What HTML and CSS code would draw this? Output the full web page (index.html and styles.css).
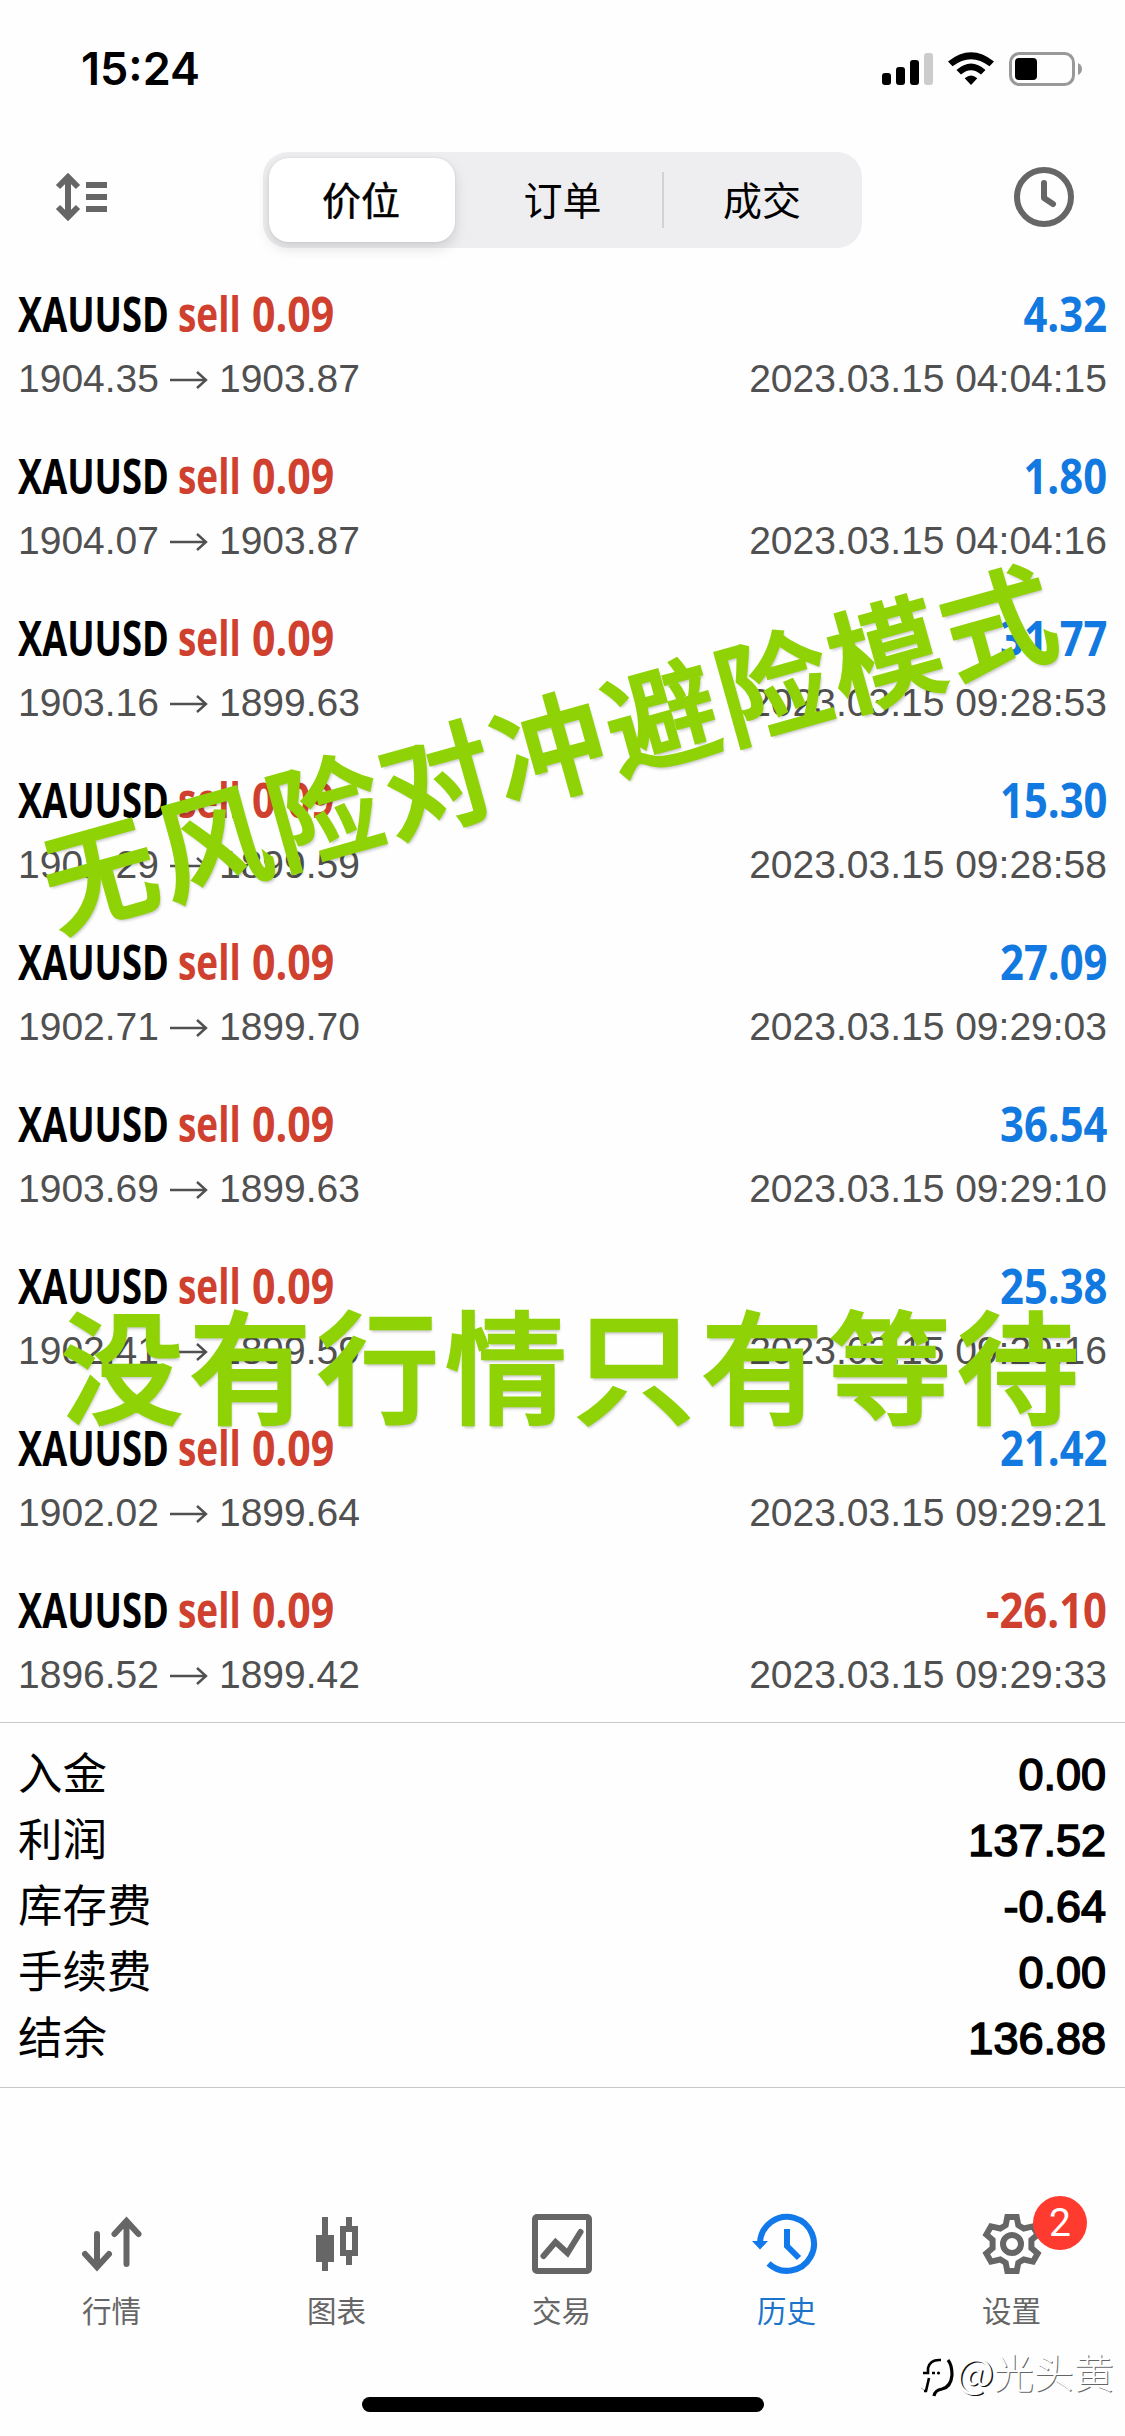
FILE: index.html
```html
<!DOCTYPE html>
<html lang="zh-CN">
<head>
<meta charset="utf-8">
<title>历史</title>
<link rel="stylesheet" href="styles.css">
</head>
<body>
<div class="screen">
  <header class="status">
    <span class="time">15:24</span>
    <svg class="status-icons" width="204" height="40" viewBox="0 0 204 40">
      <rect x="2" y="23" width="9" height="12" rx="3"/>
      <rect x="16" y="17" width="9" height="18" rx="3"/>
      <rect x="30" y="10" width="9" height="25" rx="3"/>
      <rect x="44" y="3" width="9" height="32" rx="3" fill="#ccc"/>
      <path d="M68 11.5Q91 -7 114 11.5L109.500 16.300Q91 2 72.500 16.300Z"/>
      <path d="M76.500 20Q91 7 105.500 20L101 24.500Q91 16 81 24.500Z"/>
      <path d="M84.700 28.300Q91 22.700 97.300 28.300L91 35Z"/>
      <rect x="130.500" y="3.500" width="63" height="31" rx="9" fill="none" stroke="#999" stroke-width="3"/>
      <rect x="135" y="8" width="22" height="22" rx="4"/>
      <path d="M198 13Q202 15 202 19T198 25Z" fill="#999"/>
    </svg>
  </header>

  <nav class="topbar">
    <svg class="sort" width="54" height="50" viewBox="0 0 54 50">
      <path d="M14 6V44M4 15L14 5L24 15M4 35L14 45L24 35" fill="none" stroke="#666" stroke-width="6"/>
      <path d="M32 10h21v6h-21zM32 22h21v6h-21zM32 34h21v6h-21z" fill="#666"/>
    </svg>
    <div class="segments">
      <span class="segment active">价位</span>
      <span class="segment divided">订单</span>
      <span class="segment">成交</span>
    </div>
    <svg class="clock" width="60" height="60" viewBox="0 0 60 60" fill="none" stroke="#666" stroke-width="6">
      <circle cx="30" cy="30" r="27"/>
      <path d="M30 16V31L39 37" stroke-linecap="round" stroke-linejoin="round"/>
    </svg>
  </nav>

  <svg class="defs" width="0" height="0"><symbol id="arrow" viewBox="0 0 38 20"><path d="M0 10H36M27 2L36 10L27 18" fill="none" stroke="#505050" stroke-width="2.400"/></symbol></svg>

  <main class="deals">
    <article class="deal"><div class="line"><span class="name"><b class="symbol">XAUUSD</b><b class="side">sell</b><b class="volume">0.09</b></span><b class="profit">4.32</b></div><div class="line detail"><span class="prices"><span>1904.35</span><svg><use href="#arrow"/></svg><span>1903.87</span></span><time>2023.03.15 04:04:15</time></div></article>
    <article class="deal"><div class="line"><span class="name"><b class="symbol">XAUUSD</b><b class="side">sell</b><b class="volume">0.09</b></span><b class="profit">1.80</b></div><div class="line detail"><span class="prices"><span>1904.07</span><svg><use href="#arrow"/></svg><span>1903.87</span></span><time>2023.03.15 04:04:16</time></div></article>
    <article class="deal"><div class="line"><span class="name"><b class="symbol">XAUUSD</b><b class="side">sell</b><b class="volume">0.09</b></span><b class="profit">31.77</b></div><div class="line detail"><span class="prices"><span>1903.16</span><svg><use href="#arrow"/></svg><span>1899.63</span></span><time>2023.03.15 09:28:53</time></div></article>
    <article class="deal"><div class="line"><span class="name"><b class="symbol">XAUUSD</b><b class="side">sell</b><b class="volume">0.09</b></span><b class="profit">15.30</b></div><div class="line detail"><span class="prices"><span>1901.29</span><svg><use href="#arrow"/></svg><span>1899.59</span></span><time>2023.03.15 09:28:58</time></div></article>
    <article class="deal"><div class="line"><span class="name"><b class="symbol">XAUUSD</b><b class="side">sell</b><b class="volume">0.09</b></span><b class="profit">27.09</b></div><div class="line detail"><span class="prices"><span>1902.71</span><svg><use href="#arrow"/></svg><span>1899.70</span></span><time>2023.03.15 09:29:03</time></div></article>
    <article class="deal"><div class="line"><span class="name"><b class="symbol">XAUUSD</b><b class="side">sell</b><b class="volume">0.09</b></span><b class="profit">36.54</b></div><div class="line detail"><span class="prices"><span>1903.69</span><svg><use href="#arrow"/></svg><span>1899.63</span></span><time>2023.03.15 09:29:10</time></div></article>
    <article class="deal"><div class="line"><span class="name"><b class="symbol">XAUUSD</b><b class="side">sell</b><b class="volume">0.09</b></span><b class="profit">25.38</b></div><div class="line detail"><span class="prices"><span>1902.41</span><svg><use href="#arrow"/></svg><span>1899.59</span></span><time>2023.03.15 09:29:16</time></div></article>
    <article class="deal"><div class="line"><span class="name"><b class="symbol">XAUUSD</b><b class="side">sell</b><b class="volume">0.09</b></span><b class="profit">21.42</b></div><div class="line detail"><span class="prices"><span>1902.02</span><svg><use href="#arrow"/></svg><span>1899.64</span></span><time>2023.03.15 09:29:21</time></div></article>
    <article class="deal"><div class="line"><span class="name"><b class="symbol">XAUUSD</b><b class="side">sell</b><b class="volume">0.09</b></span><b class="profit loss">-26.10</b></div><div class="line detail"><span class="prices"><span>1896.52</span><svg><use href="#arrow"/></svg><span>1899.42</span></span><time>2023.03.15 09:29:33</time></div></article>
  </main>

  <section class="totals">
    <div class="total"><span>入金</span><b>0.00</b></div>
    <div class="total"><span>利润</span><b>137.52</b></div>
    <div class="total"><span>库存费</span><b>-0.64</b></div>
    <div class="total"><span>手续费</span><b>0.00</b></div>
    <div class="total"><span>结余</span><b>136.88</b></div>
  </section>

  <footer class="tabs">
    <div class="tab">
      <svg viewBox="0 0 72 64" fill="none" stroke="#666" stroke-width="6" stroke-linecap="round"><path d="M21 22V54M9 42L21 55L33 42M50.500 52V10M38.500 22L50.500 9L62.500 22"/></svg>
      <span>行情</span>
    </div>
    <div class="tab">
      <svg viewBox="0 0 72 64" fill="#666"><path d="M21 5h6v18h6v27h-6v9h-6v-9h-6v-27h6z"/><path fill-rule="evenodd" d="M45 5h6v9h6v30h-6v9h-6v-9h-6v-30h6zM45 20v18h6v-18z"/></svg>
      <span>图表</span>
    </div>
    <div class="tab">
      <svg viewBox="0 0 72 64" fill="none" stroke="#666" stroke-width="6"><rect x="9" y="5" width="54" height="54" rx="2"/><path d="M17.500 44L29.500 30L41.500 41L54.500 20" stroke-linecap="round"/></svg>
      <span>交易</span>
    </div>
    <div class="tab current">
      <svg viewBox="0 0 72 64" fill="none" stroke="#1279ea" stroke-width="6"><path d="M9 31A27 27 0 1 1 17.500 51.500"/><path d="M36 17V34L48 46"/><path d="M1 29h16l-8 8.500z" fill="#1279ea" stroke="none"/></svg>
      <span>历史</span>
    </div>
    <div class="tab">
      <svg viewBox="0 0 72 64"><g fill="none" stroke="#666" stroke-width="6" transform="translate(36 32)"><circle r="9"/><path d="M-4.700 -27L4.700 -27L6.300 -18.800L11.800 -15.500L21 -17.600L25.700 -9.400L19.400 -4L19.400 4L25.700 9.400L21 17.600L11.800 15.500L6.300 18.800L4.700 27L-4.700 27L-6.300 18.800L-11.800 15.500L-21 17.600L-25.700 9.400L-19.400 4L-19.400 -4L-25.700 -9.400L-21 -17.600L-11.800 -15.500L-6.300 -18.800Z"/></g></svg>
      <span>设置</span>
      <i class="badge">2</i>
    </div>
  </footer>
  <div class="home"></div>

  <div class="caption tilted">无风险对冲避险模式</div>
  <div class="caption level">没有行情只有等待</div>
  <div class="watermark">
    <svg width="36" height="42" viewBox="0 0 36 42" fill="none" stroke="#000"><path d="M1 32L4 34" stroke="#aaa" stroke-width="1"/><path d="M3 17H8V12Q10 4 19 4H21M12 17H15M9 22L6 35H4" stroke-width="2.600"/><path d="M28 4Q32 9 32 19Q31 31 22 33Q15 34 14 40" stroke-width="3.200"/><circle cx="18.500" cy="17" r="1.600" fill="#000" stroke="none"/></svg><span class="at">@</span><span class="author">光头黄</span>
  </div>
</div>
</body>
</html>
```
FILE: styles.css
```css
* { box-sizing: border-box; }

body {
  margin: 0;
  background: #fefefe;
  font-family: "Liberation Sans", "Noto Sans CJK SC", sans-serif;
  color: #000;
}

svg { display: block; flex: none; }
.defs { position: absolute; }

.screen {
  position: relative;
  width: 1125px;
  height: 2436px;
  overflow: hidden;
  display: flex;
  flex-direction: column;
}

.status {
  height: 132px;
  padding: 40px 41px 0 81px;
  display: flex;
  justify-content: space-between;
}
.time { font: 600 45px/58px Inter, sans-serif; }
.status-icons { margin-top: 10px; }

.topbar {
  height: 132px;
  padding: 20px 51px 0 54px;
  display: flex;
  align-items: flex-start;
}
.sort { margin-top: 20px; }
.clock { margin: 15px 0 0 auto; }
.segments {
  width: 599px;
  height: 96px;
  margin-left: 155px;
  border-radius: 25px;
  background: #eeeef0;
  display: grid;
  grid-template-columns: 194px 201px 1fr;
  padding: 6px 0 6px 6px;
}
.segment {
  display: flex;
  align-items: center;
  justify-content: center;
  padding: 0 2px 5px 0;
  font: 400 39px/60px "Noto Sans CJK SC", sans-serif;
}
.active {
  width: 186px;
  border-radius: 20px;
  background: #fff;
  -webkit-text-stroke: .500px #000;
  box-shadow: 0 6px 14px rgba(0, 0, 0, .13), 0 0 3px rgba(0, 0, 0, .08);
}
.divided { background: linear-gradient(#d2d2d4, #d2d2d4) right / 2px 56px no-repeat; }

.deals { padding: 0 18px; }
.deal { height: 162px; padding-top: 20px; }
.line { display: flex; justify-content: space-between; height: 60px; }
.name, .profit { font: 700 48px/60px "Open Sans", sans-serif; }
.name { display: flex; }
.name b { font-weight: 700; white-space: nowrap; transform-origin: left; }
.symbol { width: 160px; transform: scaleX(.755); }
.side { width: 74px; transform: scaleX(.77); }
.volume { width: 90px; transform: scaleX(.855); }
.side, .volume { color: #d0402f; }
.profit {
  color: #1279e0;
  transform: scaleX(.87);
  transform-origin: right;
}
.loss { color: #d0402f; }

.detail {
  margin-top: 4px;
  font-size: 39px;
  line-height: 62px;
  color: #505050;
}
.prices { display: flex; align-items: center; height: 62px; }
.prices svg { width: 38px; height: 20px; margin: 1px 11px 0; }

.totals {
  height: 366px;
  padding: 18px 19px 0 18px;
  border: solid #c8c8ca;
  border-width: 1px 0;
}
.total {
  height: 66px;
  display: flex;
  justify-content: space-between;
  font-size: 45px;
  line-height: 66px;
}
.total span {
  font: 400 44.500px/60px "Noto Sans CJK SC", sans-serif;
}
.total b {
  font-weight: 400;
  line-height: 67px;
  -webkit-text-stroke: 1.600px #000;
}

.tabs {
  margin-top: 124px;
  display: grid;
  grid-template-columns: repeat(5, 1fr);
}
.tab {
  position: relative;
  display: flex;
  flex-direction: column;
  align-items: center;
  padding-right: 2px;
  color: #666;
  font: 400 29.500px/44px "Noto Sans CJK SC", sans-serif;
}
.tab svg { width: 72px; height: 64px; }
.tab span { margin-top: 11px; }
.current { color: #1b74cc; }
.badge {
  position: absolute;
  left: 133px;
  top: -16px;
  width: 54px;
  height: 54px;
  border-radius: 50%;
  background: #ff3b30;
  color: #fff;
  font: 400 39px/54px Roboto, sans-serif;
  text-align: center;
}

.home {
  width: 402px;
  height: 15px;
  margin: 66px auto 0;
  border-radius: 8px;
  background: #000;
}

.caption {
  position: absolute;
  color: #8fd205;
  font-family: "Noto Sans CJK SC", sans-serif;
  font-weight: 500;
  -webkit-text-stroke: 2.500px #8fd205;
  white-space: nowrap;
  text-shadow: 1px 3px 3px rgba(0, 0, 0, .22);
}
.tilted {
  left: 549px;
  top: 742px;
  font-size: 112.500px;
  letter-spacing: 4px;
  line-height: 140px;
  transform: translate(-50%, -50%) rotate(-15.600deg);
}
.level {
  left: 573px;
  top: 1361px;
  font-size: 122px;
  letter-spacing: 6px;
  line-height: 150px;
  transform: translate(-50%, -50%);
}

.watermark {
  position: absolute;
  left: 920px;
  top: 2344px;
  display: flex;
  align-items: center;
  color: #fff;
  font: 400 40px/46px "Noto Sans CJK SC", sans-serif;
}
.watermark svg { margin-top: 12px; }
.at { text-shadow: 1.500px 1px 0 #111; }
.author { font-weight: 300; text-shadow: 1px 1px 0 #666; }
```
